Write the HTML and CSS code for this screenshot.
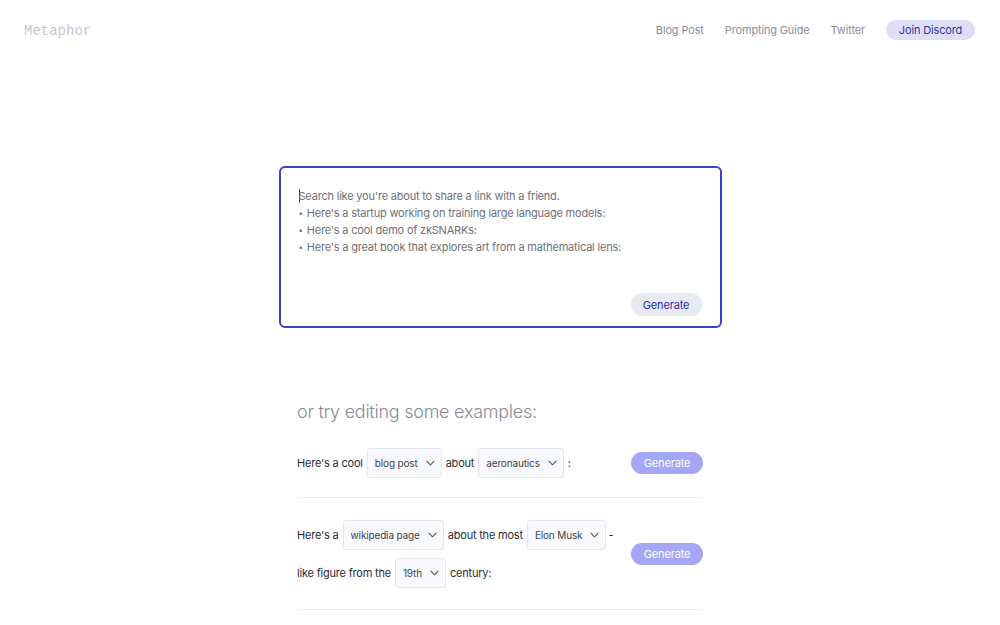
FILE: index.html
```html
<!DOCTYPE html>
<html lang="en">
<head>
<meta charset="utf-8">
<title>Metaphor</title>
<link rel="stylesheet" href="styles.css">
</head>
<body>
<header class="topbar">
  <div class="logo">Metaphor</div>
  <nav class="nav">
    <a class="nav-link" href="#">Blog Post</a>
    <a class="nav-link" href="#">Prompting Guide</a>
    <a class="nav-link" href="#">Twitter</a>
    <a class="nav-pill" href="#">Join Discord</a>
  </nav>
</header>

<main class="main">
  <section class="search-box">
    <div class="search-text">
      <div class="line"><span class="caret"></span>Search like you're about to share a link with a friend.</div>
      <div class="line"><span class="dot">•</span> Here's a startup working on training large language models:</div>
      <div class="line"><span class="dot">•</span> Here's a cool demo of zkSNARKs:</div>
      <div class="line"><span class="dot">•</span> Here's a great book that explores art from a mathematical lens:</div>
    </div>
    <div class="search-actions">
      <button class="btn-soft">Generate</button>
    </div>
  </section>

  <section class="examples">
    <h2 class="examples-title">or try editing some examples:</h2>

    <div class="example-row">
      <div class="example-text">
        <span class="word">Here's a cool</span>
        <span class="select">blog post<svg class="chev" viewBox="0 0 10 6"><path d="M1 1l4 4 4-4"/></svg></span>
        <span class="word">about</span>
        <span class="select">aeronautics<svg class="chev" viewBox="0 0 10 6"><path d="M1 1l4 4 4-4"/></svg></span>
        <span class="word">:</span>
      </div>
      <button class="btn-primary">Generate</button>
    </div>

    <div class="example-row">
      <div class="example-text">
        <span class="word">Here's a</span>
        <span class="select">wikipedia page<svg class="chev" viewBox="0 0 10 6"><path d="M1 1l4 4 4-4"/></svg></span>
        <span class="word">about the most</span>
        <span class="select">Elon Musk<svg class="chev" viewBox="0 0 10 6"><path d="M1 1l4 4 4-4"/></svg></span>
        <span class="word dash">-</span>
        <span class="word">like figure from the</span>
        <span class="select">19th<svg class="chev" viewBox="0 0 10 6"><path d="M1 1l4 4 4-4"/></svg></span>
        <span class="word">century:</span>
      </div>
      <button class="btn-primary">Generate</button>
    </div>
  </section>
</main>
</body>
</html>
```

FILE: styles.css
```css
* { box-sizing: border-box; }
html, body { margin: 0; padding: 0; background: #ffffff; }
body {
  font-family: Inter, "Liberation Sans", sans-serif;
  color: #2b2b33;
  width: 1000px;
  height: 625px;
  overflow: hidden;
}

.topbar {
  display: flex;
  align-items: center;
  justify-content: space-between;
  height: 60px;
  padding: 0 25px 0 24px;
}
.logo {
  font-family: "Liberation Mono", "DejaVu Sans Mono", monospace;
  font-size: 14px;
  color: #c6c6ce;
  padding-top: 1px;
}
.nav {
  display: flex;
  align-items: center;
  gap: 21px;
}
.nav-link {
  font-size: 11px;
  letter-spacing: -0.15px;
  color: #8e8e98;
  text-decoration: none;
  white-space: nowrap;
}
.nav-pill {
  font-size: 11px;
  letter-spacing: -0.15px;
  color: #2f33a8;
  text-decoration: none;
  white-space: nowrap;
  background: #dedff7;
  border-radius: 999px;
  height: 20px;
  line-height: 20px;
  width: 89px;
  text-align: center;
}

.main {
  display: flex;
  flex-direction: column;
  align-items: center;
  padding-top: 106px;
}

.search-box {
  width: 443px;
  height: 162px;
  border: 2px solid #3d42cc;
  border-radius: 6px;
  display: flex;
  flex-direction: column;
  justify-content: space-between;
  padding: 20px 18px 10px 18px;
}
.search-text {
  font-size: 11px;
  letter-spacing: -0.2px;
  line-height: 17px;
  color: #707078;
}
.line { white-space: nowrap; position: relative; }
.dot { font-size: 8px; margin-right: 1px; vertical-align: 1px; }
.caret {
  position: absolute;
  left: 0;
  top: 1px;
  width: 1px;
  height: 14px;
  background: #555;
}
.search-actions {
  display: flex;
  justify-content: flex-end;
}
.btn-soft {
  font-family: inherit;
  font-size: 11px;
  letter-spacing: -0.15px;
  color: #2a2eb0;
  background: #e8eaf2;
  border: none;
  border-radius: 999px;
  width: 71px;
  height: 23px;
  padding: 0;
}

.examples {
  width: 406px;
  margin-top: 72px;
}
.examples-title {
  font-size: 18px;
  letter-spacing: -0.25px;
  font-weight: 300;
  color: #8a8a98;
  margin: 0 0 13px 0;
  line-height: 24px;
}
.example-row {
  display: flex;
  align-items: center;
  justify-content: space-between;
  padding: 11px 0 19px 0;
  border-bottom: 1px solid #ececf0;
}
.example-row + .example-row { padding-top: 22px; padding-bottom: 21px; }
.example-text {
  width: 328px;
  display: flex;
  flex-wrap: wrap;
  align-items: center;
  column-gap: 4px;
  row-gap: 8px;
}
.word {
  font-size: 11px;
  letter-spacing: -0.2px;
  color: #2b2b33;
  line-height: 30px;
}
.dash { margin-left: -2px; }
.select {
  display: inline-flex;
  align-items: center;
  height: 30px;
  padding: 0 6px 0 7px;
  background: #f8f9fd;
  border: 1px solid #e4e6ee;
  border-radius: 3px;
  font-size: 10px;
  letter-spacing: -0.15px;
  color: #44444c;
}
.chev {
  width: 9px;
  height: 6px;
  margin-left: 8px;
  fill: none;
  stroke: #55555e;
  stroke-width: 1.2;
  stroke-linecap: round;
  stroke-linejoin: round;
}
.btn-primary {
  font-family: inherit;
  font-size: 11px;
  letter-spacing: -0.15px;
  color: #ffffff;
  background: #a4a7f5;
  border: none;
  border-radius: 999px;
  width: 72px;
  height: 22px;
  padding: 0;
}
```
